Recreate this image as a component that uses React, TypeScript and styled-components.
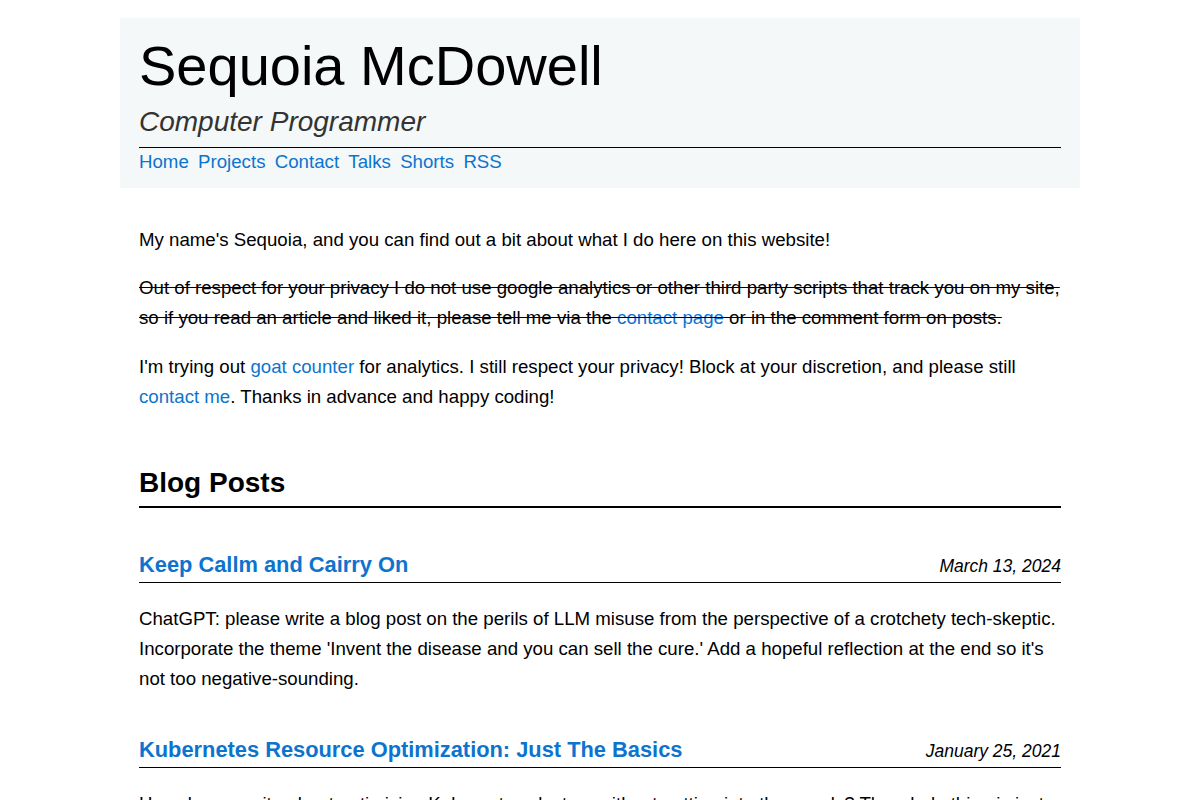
import React from "react";
import styled, { createGlobalStyle } from "styled-components";

const GlobalStyle = createGlobalStyle`
  html, body {
    margin: 0;
    padding: 0;
    background: #ffffff;
  }
  body {
    font-family: "Liberation Sans", Arial, Helvetica, sans-serif;
    font-size: 18.667px;
    color: #000000;
  }
`;

const Page = styled.div`
  width: 960px;
  margin: 0 auto;
  padding-top: 18px;
`;

const Header = styled.header`
  background: #f4f8f9;
  padding: 16px 19px 14px;
`;

const TitleBlock = styled.div`
  border-bottom: 1px solid #000;
  padding-bottom: 9px;
`;

const SiteTitle = styled.h1`
  margin: 0;
  font-size: 56px;
  line-height: 64px;
  font-weight: 400;
`;

const Subtitle = styled.p`
  margin: 8px 0 0;
  font-size: 28px;
  line-height: 32px;
  font-style: italic;
  color: #333333;
`;

const Nav = styled.nav`
  display: flex;
  gap: 9.3px;
  padding-top: 2px;
`;

const Link = styled.a`
  color: #0c74ce;
  text-decoration: none;
  cursor: pointer;
`;

const NavLink = styled(Link)`
  font-size: 18.667px;
  line-height: 24px;
`;

const Main = styled.main`
  padding: 37px 19px 0;
`;

const Para = styled.p<{ $struck?: boolean }>`
  margin: 0 0 ${(p) => (p.$struck ? "19.5px" : "17.5px")};
  font-size: 18.667px;
  line-height: 30px;
  text-decoration: ${(p) => (p.$struck ? "line-through" : "none")};
`;

const SectionHeading = styled.h2`
  margin: 54px 0 0;
  font-size: 28px;
  line-height: 34px;
  font-weight: 700;
  padding-bottom: 6px;
  border-bottom: 2px solid #000;
`;

const PostList = styled.div`
  padding-top: 43px;
  display: flex;
  flex-direction: column;
  gap: 42px;
`;

const Post = styled.article`
  display: flex;
  flex-direction: column;
`;

const PostHeader = styled.div`
  display: flex;
  justify-content: space-between;
  align-items: baseline;
  padding-bottom: 3px;
  border-bottom: 1px solid #000;
`;

const PostTitle = styled(Link)`
  font-size: 21.84px;
  line-height: 28px;
  font-weight: 700;
`;

const PostDate = styled.time`
  font-size: 17.5px;
  font-style: italic;
`;

const PostSummary = styled.p`
  margin: 21px 0 0;
  font-size: 18.667px;
  line-height: 30px;
`;

const navItems = ["Home", "Projects", "Contact", "Talks", "Shorts", "RSS"];

const posts = [
  {
    title: "Keep Callm and Cairry On",
    date: "March 13, 2024",
    summary:
      "ChatGPT: please write a blog post on the perils of LLM misuse from the perspective of a crotchety tech-skeptic. Incorporate the theme 'Invent the disease and you can sell the cure.' Add a hopeful reflection at the end so it's not too negative-sounding.",
  },
  {
    title: "Kubernetes Resource Optimization: Just The Basics",
    date: "January 25, 2021",
    summary:
      "How do you write about optimizing Kubernetes clusters without getting into the weeds? The whole thing is just a matter of knowing where to look, so here are the basics to get you started.",
  },
];

export default function App() {
  return (
    <>
      <GlobalStyle />
      <Page>
        <Header>
          <TitleBlock>
            <SiteTitle>Sequoia McDowell</SiteTitle>
            <Subtitle>Computer Programmer</Subtitle>
          </TitleBlock>
          <Nav>
            {navItems.map((item) => (
              <NavLink key={item}>{item}</NavLink>
            ))}
          </Nav>
        </Header>
        <Main>
          <Para>
            My name's Sequoia, and you can find out a bit about what I do here
            on this website!
          </Para>
          <Para $struck>
            Out of respect for your privacy I do not use google analytics or
            other third party scripts that track you on my site, so if you read
            an article and liked it, please tell me via the{" "}
            <Link>contact page</Link> or in the comment form on posts.
          </Para>
          <Para>
            I'm trying out <Link>goat counter</Link> for analytics. I still
            respect your privacy! Block at your discretion, and please still{" "}
            <Link>contact me</Link>. Thanks in advance and happy coding!
          </Para>
          <SectionHeading>Blog Posts</SectionHeading>
          <PostList>
            {posts.map((post) => (
              <Post key={post.title}>
                <PostHeader>
                  <PostTitle>{post.title}</PostTitle>
                  <PostDate>{post.date}</PostDate>
                </PostHeader>
                <PostSummary>{post.summary}</PostSummary>
              </Post>
            ))}
          </PostList>
        </Main>
      </Page>
    </>
  );
}
